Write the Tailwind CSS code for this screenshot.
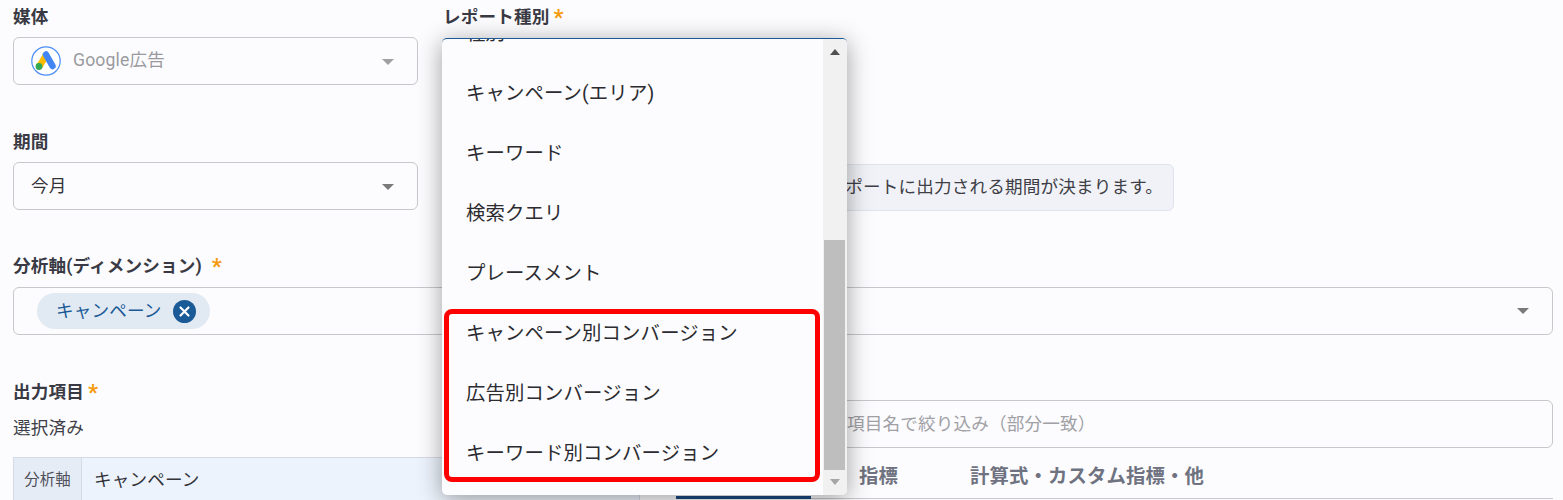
<!DOCTYPE html>
<html lang="ja">

<head>
  <meta charset="UTF-8">
  <meta name="viewport" content="width=device-width, initial-scale=1.0">
  <title>レポート作成</title>
  <script src="https://cdn.jsdelivr.net/npm/@tailwindcss/browser@4"></script>
</head>

<body class="bg-[#fcfcfe] h-[500px] overflow-hidden font-['Roboto','Noto_Sans_CJK_JP',sans-serif] text-[17.6px] tracking-[0.15px] text-[#33333a]">
  <div class="pl-[13px] pr-[10px]">
    <!-- Media / report type -->
    <div class="flex gap-[25px] -mt-[2px]">
      <div class="w-[405px]">
        <label class="block h-[39px] pt-[6px] leading-[26px] font-bold text-[#3a3a44]">媒体</label>
        <div class="h-[48px] flex items-center justify-between pl-[17px] pr-[23px] border border-[#c8c8cc] rounded-[6px]">
          <div class="flex items-center gap-[12px] text-[#9a9a9e]">
            <svg class="w-[30px] h-[30px]" viewBox="0 0 30 30">
              <circle cx="15" cy="15" r="14.2" fill="#fff" stroke="#4a8cf7" stroke-width="1.2" />
              <path d="M15 9.500 L8 21" stroke="#fbbc04" stroke-width="6.500" fill="none" />
              <path d="M15 8.500 L21.500 20" stroke="#4285f4" stroke-width="6.500" stroke-linecap="round" fill="none" />
              <circle cx="8" cy="20.500" r="3.400" fill="#34a853" />
            </svg>
            <span class="-mt-[2px]">Google広告</span>
          </div>
          <span class="w-0 h-0 border-x-[6.500px] border-x-transparent border-t-[6px] border-t-[#a0a0a0] mt-[2px]"></span>
        </div>
      </div>

      <div class="relative w-[405px]">
        <label class="block h-[39px] pt-[6px] leading-[26px] font-bold text-[#3a3a44]">レポート種別<span class="inline-block translate-y-[2px] text-[#f59a0c] text-[22px] leading-none ml-[4px]">*</span></label>
        <!-- Open dropdown -->
        <div class="absolute left-[-1px] top-[40px] w-[405px] h-[457px] bg-[#fcfcfe] rounded-[5px] overflow-hidden border-t border-t-[#1a5a96] shadow-[0_4px_24px_rgba(0,0,0,0.38)] z-10 flex">
          <ul class="w-[381px] -mt-[35px] text-[19.36px] text-[#2b2b30]">
            <li class="h-[60px] pl-[24px] flex items-center">種別</li>
            <li class="h-[60px] pl-[24px] flex items-center">キャンペーン(エリア)</li>
            <li class="h-[60px] pl-[24px] flex items-center">キーワード</li>
            <li class="h-[60px] pl-[24px] flex items-center">検索クエリ</li>
            <li class="h-[60px] pl-[24px] flex items-center">プレースメント</li>
            <li class="h-[60px] pl-[24px] flex items-center">キャンペーン別コンバージョン</li>
            <li class="h-[60px] pl-[24px] flex items-center">広告別コンバージョン</li>
            <li class="h-[60px] pl-[24px] flex items-center">キーワード別コンバージョン</li>
          </ul>
          <!-- Scrollbar -->
          <div class="w-[24px] bg-[#f1f1f1] flex flex-col items-center">
            <span class="mt-[10px] w-0 h-0 border-x-[5.500px] border-x-transparent border-b-[6px] border-b-[#505050]"></span>
            <span class="mt-[185px] ml-[-1px] w-[21px] h-[230px] bg-[#bebebe]"></span>
            <span class="mt-[9px] w-0 h-0 border-x-[5.500px] border-x-transparent border-t-[6px] border-t-[#a5a5a5]"></span>
          </div>
          <!-- Highlight -->
          <div class="absolute left-[2px] top-[270px] w-[376px] h-[173px] border-[5px] border-[#ff0000] rounded-[8px]"></div>
        </div>
      </div>
    </div>

    <!-- Period -->
    <div class="flex gap-[25px] mt-[44px]">
      <div class="w-[405px]">
        <label class="block h-[33px] leading-[26px] font-bold text-[#3a3a44]">期間</label>
        <div class="h-[48px] flex items-center justify-between pl-[17px] pr-[23px] border border-[#c8c8cc] rounded-[6px] text-[#33333a]">
          <span class="mt-[1px]">今月</span>
          <span class="w-0 h-0 border-x-[6.500px] border-x-transparent border-t-[6px] border-t-[#7a7a7a] mt-[2px]"></span>
        </div>
      </div>
      <div class="flex-1 pt-[35px]">
        <div class="w-[731px] h-[47px] flex items-center justify-end pr-[10px] bg-[#f1f2f7] border border-[#dfe3ee] rounded-[6px] text-[#3f3f48]">レポートに出力される期間が決まります。</div>
      </div>
    </div>

    <!-- Dimensions -->
    <label class="block mt-[42px] h-[34px] leading-[26px] font-bold text-[#3a3a44]">分析軸(ディメンション)<span class="inline-block translate-y-[2px] text-[#f59a0c] text-[22px] leading-none ml-[10px]">*</span></label>
    <div class="h-[48px] flex items-center justify-between pl-[23px] pr-[23px] border border-[#c8c8cc] rounded-[6px]">
      <div class="h-[36px] pl-[19px] pr-[14px] flex items-center gap-[11px] rounded-full bg-[#e1e9f2] text-[#1a5a96]">
        キャンペーン
        <svg class="w-[23px] h-[23px]" viewBox="0 0 23 23">
          <circle cx="11.500" cy="11.500" r="11.500" fill="#1a5a96" />
          <path d="M7.500 7.500 L15.500 15.500 M15.500 7.500 L7.500 15.500" stroke="#fff" stroke-width="2.200" stroke-linecap="round" />
        </svg>
      </div>
      <span class="w-0 h-0 border-x-[6.500px] border-x-transparent border-t-[6px] border-t-[#7a7a7a]"></span>
    </div>

    <!-- Output fields -->
    <div class="flex mt-[42px] gap-[36px]">
      <div class="w-[627px] shrink-0">
        <label class="block h-[37px] pt-[2px] leading-[26px] font-bold text-[#3a3a44]">出力項目<span class="inline-block translate-y-[2px] text-[#f59a0c] text-[22px] leading-none ml-[4px]">*</span></label>
        <p class="h-[43px] pt-[1px] leading-[26px] text-[#3f3f48]">選択済み</p>
        <div class="flex h-[60px] border-t border-x border-[#d5dbe6] bg-[#edf3fc]">
          <div class="w-[68px] bg-[#e6ecf6] border-r border-[#d5dbe6] pb-[13px] flex items-center justify-center text-[15.4px] text-[#50505a]">分析軸</div>
          <div class="pl-[12px] pb-[14px] flex items-center text-[#33333a]">キャンペーン</div>
        </div>
      </div>
      <div class="flex-1 pt-[23px]">
        <div class="h-[48px] flex items-center pl-[170px] border border-[#c8c8cc] rounded-[6px] text-[#a0a0a5]">項目名で絞り込み（部分一致）</div>
        <div class="flex h-[51px] border-b border-[#c8c8cc] text-[19.36px] font-bold text-[#6f7280]">
          <div class="w-[135px] h-[51px] border-b-[3px] border-[#1a4a80]"></div>
          <div class="w-[159px] pl-[48px] pt-[14px]">指標</div>
          <div class="pt-[14px]">計算式・カスタム指標・他</div>
        </div>
      </div>
    </div>
  </div>
</body>

</html>
